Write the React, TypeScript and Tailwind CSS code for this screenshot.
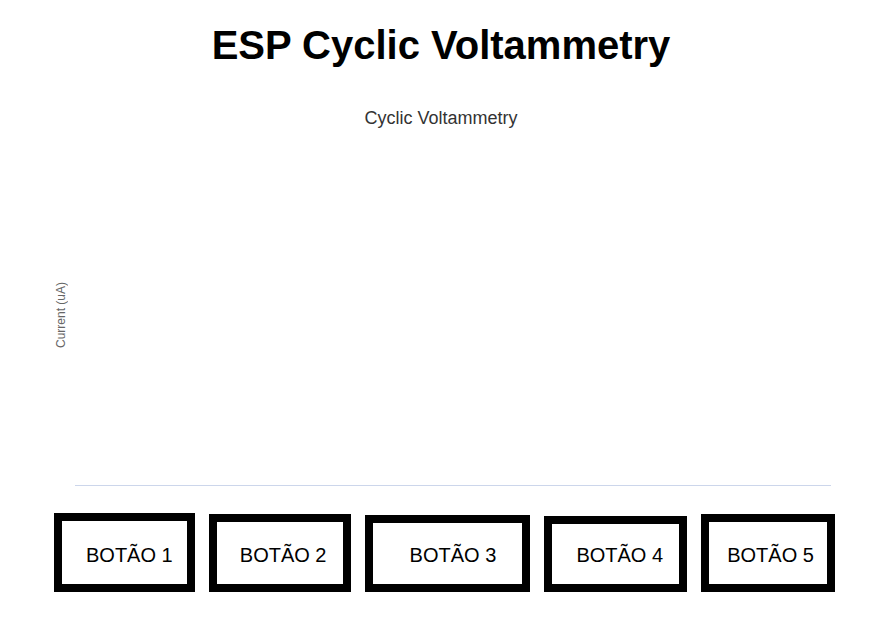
const buttons = [
  { label: "BOTÃO 1", box: "h-[79px] pl-6" },
  { label: "BOTÃO 2", box: "h-[78px] pl-[23px]" },
  { label: "BOTÃO 3", box: "h-[77px] pl-[37px]" },
  { label: "BOTÃO 4", box: "h-[76px] pl-6" },
  { label: "BOTÃO 5", box: "h-[78px] pl-[18px]" },
];

function Chart() {
  return (
    <section className="flex flex-col pr-[57px] pl-[55px]">
      <h2 className="-ml-1 text-center text-[18px] leading-6 text-[#333333]">Cyclic Voltammetry</h2>
      <div className="mt-[15px] flex h-[341px]">
        <div className="flex w-5 items-center">
          <span className="rotate-180 text-[12px] leading-[13px] text-[#666666] [writing-mode:vertical-rl]">
            Current (uA)
          </span>
        </div>
        <div className="grow border-b border-[#ccd6eb]" />
      </div>
    </section>
  );
}

export default function App() {
  return (
    <main className="min-h-screen bg-white pt-[21px] font-['Liberation_Sans',Arial,sans-serif] text-black">
      <h1 className="-ml-1.5 text-center text-[40px] leading-12 font-bold">ESP Cyclic Voltammetry</h1>
      <div className="mt-[37px]">
        <Chart />
      </div>
      <div className="mt-[27px] grid grid-cols-[141fr_142fr_166fr_143fr_134fr] items-end gap-[14px] pr-[53px] pl-[54px]">
        {buttons.map((button) => (
          <button
            key={button.label}
            type="button"
            className={`flex items-end border-8 border-black bg-white pb-[17px] text-left text-[20px] leading-6 whitespace-nowrap ${button.box}`}
          >
            {button.label}
          </button>
        ))}
      </div>
    </main>
  );
}
